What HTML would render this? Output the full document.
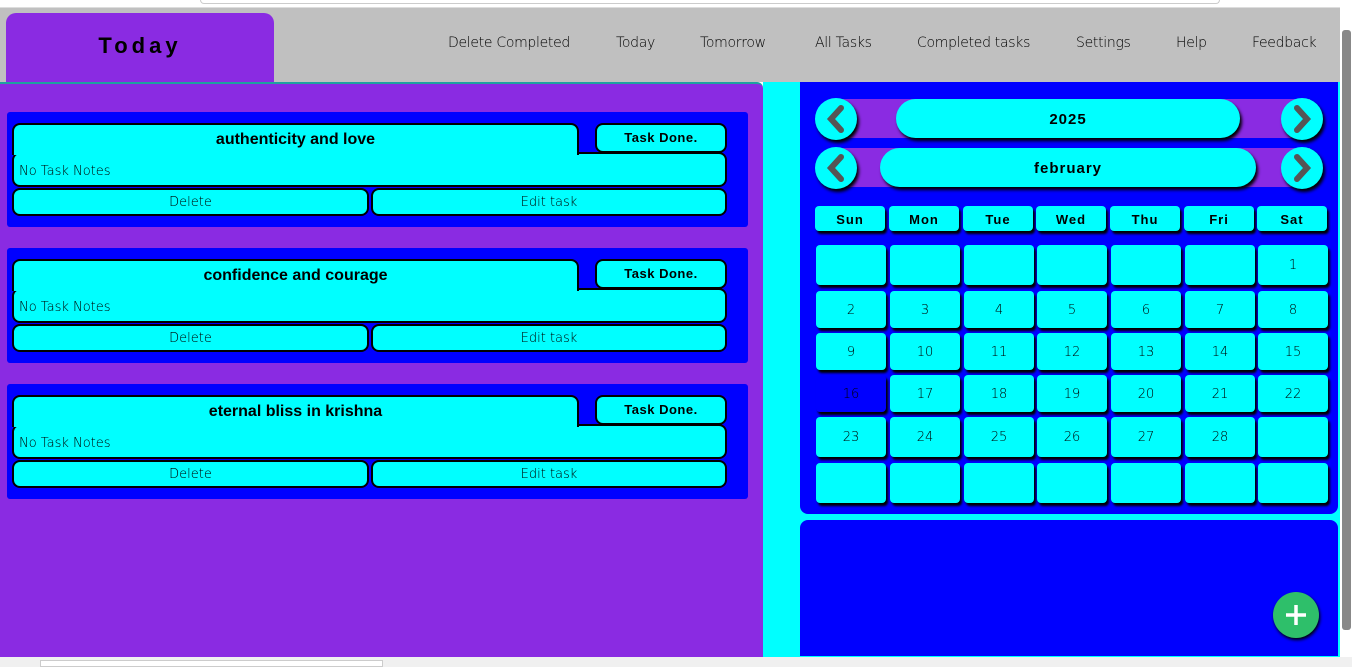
<!DOCTYPE html>
<html><head><style>
*{box-sizing:border-box;margin:0;padding:0}
body{width:1352px;height:667px;overflow:hidden;background:#fff;font-family:"Liberation Sans","DejaVu Sans",sans-serif;position:relative}
.abs{position:absolute}
.nav{left:0;top:7px;width:1340px;height:75px;background:#c0c0c0;border-top:1px solid #ddd}
.tab{left:6px;top:13px;width:268px;height:69px;background:#8a2be2;border-radius:10px 10px 0 0;text-align:center;line-height:66px;font-weight:bold;font-size:22px;letter-spacing:4px}
.nl{top:35px;font-size:14px;color:#000;font-family:"DejaVu Sans",sans-serif;font-weight:300;letter-spacing:-0.3px}
.left{left:0;top:82px;width:763px;height:575px;background:#8a2be2;border-top:2px solid #20a0a0;border-radius:0 6px 0 0}
.cyan{left:763px;top:82px;width:577px;height:575px;background:#0ff}
.cal{left:800px;top:82px;width:538px;height:432px;background:#00f;border-radius:0 0 8px 8px}
.low{left:800px;top:520px;width:538px;height:136px;background:#00f;border-radius:8px 8px 0 0}
.c{background:#0ff;position:absolute;border:2px solid #000;border-radius:8px}
.box{background:#00f;position:absolute;left:7px;width:741px;height:115px;border-radius:3px}
.t{font-weight:bold;font-size:16px;text-align:center;line-height:29px}
.td{font-weight:bold;font-size:13px;text-align:center;line-height:25px;letter-spacing:.5px}
.nt{font-size:13px;font-family:"DejaVu Sans",sans-serif;font-weight:300;color:#000;padding-left:5px;line-height:30px}
.bt{font-size:13px;font-family:"DejaVu Sans",sans-serif;font-weight:300;color:#000;text-align:center;line-height:26px}
.cell{position:absolute;background:#0ff;border-radius:4px;box-shadow:2px 3px 2px #000;text-align:center;font-size:13px;font-family:"DejaVu Sans",sans-serif;font-weight:300;color:#000}
.hd{font-weight:bold;font-family:"Liberation Sans",sans-serif;font-size:13px;letter-spacing:1px;color:#000}
.arr{position:absolute;width:42px;height:42px;border-radius:50%;background:#0ff;box-shadow:2px 3px 3px #000;display:flex;align-items:center;justify-content:center}
.pill{position:absolute;background:#0ff;border-radius:20px;box-shadow:2px 3px 3px #000;text-align:center;font-weight:bold;font-size:15px;line-height:42px;letter-spacing:1px}
</style></head><body>
<div class="abs" style="left:200px;top:0;width:1020px;height:4px;border:1px solid #ccc;border-top:0;border-radius:0 0 8px 8px"></div>
<div class="abs nav"></div>
<div class="abs tab">Today</div>
<div class="abs nl" style="left:448px">Delete Completed</div>
<div class="abs nl" style="left:616px">Today</div>
<div class="abs nl" style="left:700px">Tomorrow</div>
<div class="abs nl" style="left:815px">All Tasks</div>
<div class="abs nl" style="left:917px">Completed tasks</div>
<div class="abs nl" style="left:1076px">Settings</div>
<div class="abs nl" style="left:1176px">Help</div>
<div class="abs nl" style="left:1252px">Feedback</div>
<div class="abs cyan"></div>
<div class="abs left"></div>
<div class="abs cal"></div>
<div class="abs low"></div>
<div class="abs" style="left:1340px;top:7px;width:12px;height:650px;background:#fff"></div>
<div class="abs" style="left:1342px;top:30px;width:9px;height:600px;background:#888;border-radius:3px"></div>
<div class="abs" style="left:0;top:657px;width:1352px;height:10px;background:#f0f0f0"></div>
<div class="abs" style="left:40px;top:660px;width:343px;height:7px;background:#fff;border:1px solid #ccc"></div>

<div class="box" style="top:112px"></div>
<div class="box" style="top:248px"></div>
<div class="box" style="top:384px"></div>
<div id="tasks"></div>
<script>
var names=["authenticity and love","confidence and courage","eternal bliss in krishna"];
var h="";
names.forEach(function(n,i){var y=123+i*136;
h+='<div class="c nt" style="left:12px;top:'+(y+29)+'px;width:715px;height:35px;line-height:35px">No Task Notes</div>';
h+='<div class="c t" style="left:12px;top:'+y+'px;width:567px;height:32px;border-bottom:0;border-radius:8px 8px 0 0">'+n+'</div>';
h+='<div class="c td" style="left:595px;top:'+y+'px;width:132px;height:30px">Task Done.</div>';
h+='<div class="c bt" style="left:12px;top:'+(y+65)+'px;width:357px;height:28px">Delete</div>';
h+='<div class="c bt" style="left:371px;top:'+(y+65)+'px;width:356px;height:28px">Edit task</div>';
});
document.getElementById('tasks').innerHTML=h;
</script>

<div class="abs" style="left:830px;top:99px;width:480px;height:39px;background:#8a2be2"></div>
<div class="abs" style="left:830px;top:148px;width:480px;height:39px;background:#8a2be2"></div>
<div class="pill" style="left:896px;top:99px;width:344px;height:39px">2025</div>
<div class="pill" style="left:880px;top:148px;width:376px;height:39px">february</div>
<div class="arr" style="left:815px;top:98px"><svg width="20" height="28"><path d="M15 3 L5 14 L15 25" stroke="#555" stroke-width="6" fill="none" stroke-linecap="round"/></svg></div>
<div class="arr" style="left:1281px;top:98px"><svg width="20" height="28"><path d="M5 3 L15 14 L5 25" stroke="#555" stroke-width="6" fill="none" stroke-linecap="round"/></svg></div>
<div class="arr" style="left:815px;top:147px"><svg width="20" height="28"><path d="M15 3 L5 14 L15 25" stroke="#555" stroke-width="6" fill="none" stroke-linecap="round"/></svg></div>
<div class="arr" style="left:1281px;top:147px"><svg width="20" height="28"><path d="M5 3 L15 14 L5 25" stroke="#555" stroke-width="6" fill="none" stroke-linecap="round"/></svg></div>
<div id="grid"></div>
<script>
var xs=[815,889,963,1036,1110,1184,1257];
var d=["Sun","Mon","Tue","Wed","Thu","Fri","Sat"];
var g="";
d.forEach(function(n,i){g+='<div class="cell hd" style="left:'+xs[i]+'px;top:206px;width:70px;height:25px;line-height:27px">'+n+'</div>';});
var rows=[[245,40],[291,37],[333,37],[375,37],[417,40],[463,40]];
for(var r=0;r<6;r++){for(var c=0;c<7;c++){var day=r*7+c; var num=day>=6&&day<34?day-5:"";
var bg=num===16?"background:#00f;color:#000;":"";
g+='<div class="cell" style="'+bg+'left:'+(xs[c]+1)+'px;top:'+rows[r][0]+'px;width:70px;height:'+rows[r][1]+'px;line-height:'+(rows[r][1]+2)+'px">'+num+'</div>';}}
document.getElementById('grid').innerHTML=g;
</script>
<div class="abs" style="left:1273px;top:592px;width:46px;height:46px;border-radius:50%;background:#2ebf6a;box-shadow:1px 2px 3px #000"><svg width="46" height="46"><path d="M23 13V33M13 23H33" stroke="#fff" stroke-width="3.5"/></svg></div>
</body></html>
